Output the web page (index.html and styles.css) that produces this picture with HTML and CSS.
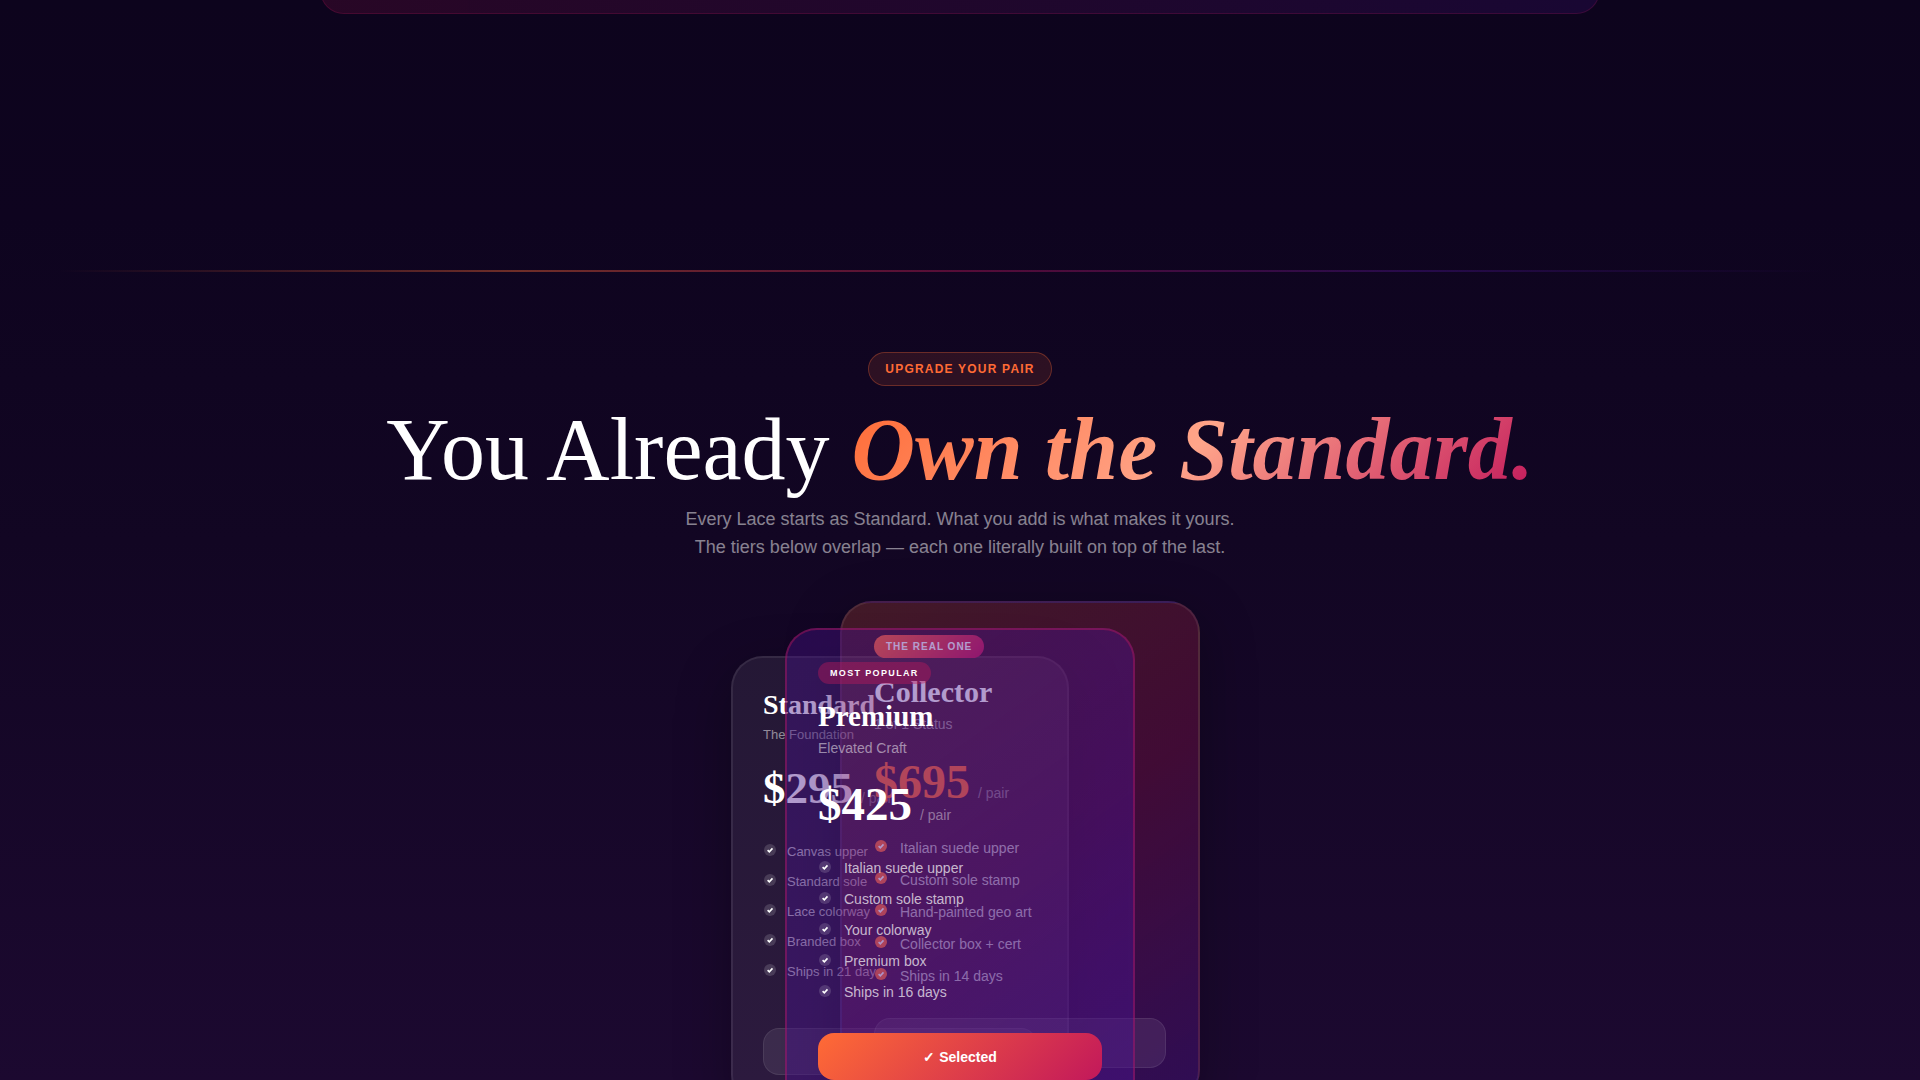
FILE: index.html
```html
<!DOCTYPE html>
<html lang="en">
<head>
    <meta charset="UTF-8">
    <meta name="viewport" content="width=device-width, initial-scale=1.0">
    <title>Lace</title>
    <link rel="stylesheet" href="styles.css">
</head>
<body>
    <svg class="sprite" aria-hidden="true">
        <symbol id="check" viewBox="0 0 14 14">
            <circle cx="7" cy="7" r="6"/>
            <path d="M4.6 7.2l1.7 1.6 3.2-3.4" fill="none" stroke="currentColor" stroke-width="1.6"/>
        </symbol>
    </svg>

    <div class="panel-end"></div>
    <hr class="divider">

    <section class="pricing">
        <span class="eyebrow">Upgrade Your Pair</span>
        <h1>You Already <em>Own the Standard.</em></h1>
        <p class="lead">Every Lace starts as Standard. What you add is what makes it yours.<br>The tiers below overlap — each one literally built on top of the last.</p>

        <div class="tiers">
            <article class="tier standard">
                <h2>Standard</h2>
                <p class="sub">The Foundation</p>
                <p class="price">$295<span>/ pair</span></p>
                <ul>
                    <li><svg><use href="#check"/></svg>Canvas upper</li>
                    <li><svg><use href="#check"/></svg>Standard sole</li>
                    <li><svg><use href="#check"/></svg>Lace colorway</li>
                    <li><svg><use href="#check"/></svg>Branded box</li>
                    <li><svg><use href="#check"/></svg>Ships in 21 days</li>
                </ul>
                <button class="btn" type="button">Select</button>
            </article>

            <article class="tier collector">
                <span class="badge">The Real One</span>
                <h2>Collector</h2>
                <p class="sub">1 of 1 Status</p>
                <p class="price">$695<span>/ pair</span></p>
                <ul>
                    <li><svg><use href="#check"/></svg>Italian suede upper</li>
                    <li><svg><use href="#check"/></svg>Custom sole stamp</li>
                    <li><svg><use href="#check"/></svg>Hand-painted geo art</li>
                    <li><svg><use href="#check"/></svg>Collector box + cert</li>
                    <li><svg><use href="#check"/></svg>Ships in 14 days</li>
                </ul>
                <button class="btn" type="button">Select</button>
            </article>

            <article class="tier premium">
                <span class="badge">Most Popular</span>
                <h2>Premium</h2>
                <p class="sub">Elevated Craft</p>
                <p class="price">$425<span>/ pair</span></p>
                <ul>
                    <li><svg><use href="#check"/></svg>Italian suede upper</li>
                    <li><svg><use href="#check"/></svg>Custom sole stamp</li>
                    <li><svg><use href="#check"/></svg>Your colorway</li>
                    <li><svg><use href="#check"/></svg>Premium box</li>
                    <li><svg><use href="#check"/></svg>Ships in 16 days</li>
                </ul>
                <button class="btn selected" type="button">✓ Selected</button>
            </article>
        </div>
    </section>
</body>
</html>
```
FILE: styles.css
```css
* {
    box-sizing: border-box;
    margin: 0;
    padding: 0;
}
html {
    height: 100%;
    overflow: hidden;
}
body {
    display: flow-root;
    min-height: 100%;
    background: linear-gradient(180deg, #0d041d 0%, #0e041f 20%, #120623 50%, #1c0930 100%);
    color: #fff;
    font-family: "Liberation Sans", Arial, sans-serif;
}
.sprite {
    display: none;
}
.panel-end {
    max-width: 1280px;
    height: 40px;
    margin: -26px auto 0;
    border: 1px solid rgba(194, 24, 91, 0.2);
    border-radius: 0 0 24px 24px;
    background: linear-gradient(90deg, rgba(194, 24, 91, 0.15), rgba(74, 20, 140, 0.2));
}
.divider {
    height: 2px;
    margin: 256px 0 80px;
    border: 0;
    background: linear-gradient(90deg, transparent 3%, #ff6b35 27%, #c2185b 50%, #4a148c 74%, transparent 95%);
    opacity: 0.4;
}
.pricing {
    display: flex;
    flex-direction: column;
    align-items: center;
    text-align: center;
}
.eyebrow {
    padding: 0 16px;
    border: 1px solid rgba(255, 107, 53, 0.3);
    border-radius: 17px;
    background: rgba(255, 107, 53, 0.12);
    color: #ff6b35;
    font-size: 12px;
    font-weight: 700;
    line-height: 32px;
    letter-spacing: 0.1em;
    text-transform: uppercase;
}
h1 {
    margin-top: 16px;
    font-family: "Liberation Serif", "Times New Roman", serif;
    font-size: 88px;
    font-weight: 400;
    line-height: 96px;
}
h1 em {
    font-weight: 700;
    background: linear-gradient(135deg, #ff6b35 0%, #ffa58a 50%, #c2185b 100%);
    -webkit-background-clip: text;
    background-clip: text;
    color: transparent;
}
.lead {
    margin-top: 7px;
    color: rgba(255, 255, 255, 0.5);
    font-size: 18px;
    line-height: 28px;
}

/* the three cards share one grid cell and fan out to the right */
.tiers {
    display: grid;
    width: 458px;
    margin-top: 40px;
    text-align: left;
}
.tier {
    grid-area: 1 / 1;
    align-self: start;
    padding: 32px;
    border: 2px solid rgba(255, 255, 255, 0.08);
    border-radius: 32px;
}
.tier h2 {
    font-family: "Liberation Serif", "Times New Roman", serif;
    line-height: 34px;
}
.tier .sub {
    margin-top: 7px;
    color: rgba(255, 255, 255, 0.5);
    line-height: 16px;
}
.tier .price {
    font-family: "Liberation Serif", "Times New Roman", serif;
    font-weight: 700;
    line-height: 48px;
}
.tier .price span {
    margin-left: 8px;
    color: rgba(255, 255, 255, 0.4);
    font-family: "Liberation Sans", Arial, sans-serif;
    font-size: 14px;
    font-weight: 400;
}
.tier ul {
    list-style: none;
}
.tier li {
    display: flex;
    align-items: center;
    gap: 12px;
    color: rgba(255, 255, 255, 0.7);
}
.tier li svg {
    width: 14px;
    height: 14px;
    margin-bottom: 4px;
    fill: rgba(255, 255, 255, 0.15);
    color: #fff;
}
.badge {
    display: inline-block;
    padding: 0 12px;
    border-radius: 12px;
    font-weight: 700;
    letter-spacing: 0.1em;
    text-transform: uppercase;
}
.btn {
    width: 100%;
    height: 47px;
    border: 1px solid rgba(255, 255, 255, 0.08);
    border-radius: 16px;
    background: rgba(255, 255, 255, 0.08);
    color: #fff;
    font-family: inherit;
    font-size: 14px;
    font-weight: 700;
}

.standard {
    width: 338px;
    margin-top: 55px;
    padding: 30px;
    background: rgba(255, 255, 255, 0.07);
    box-shadow: 0 16px 56px rgba(0, 0, 0, 0.3);
    font-size: 13px;
}
.standard h2 {
    font-size: 28px;
}
.standard .sub {
    margin-top: 5px;
}
.standard .price {
    margin: 21px 0 15px;
    font-size: 45px;
}
.standard li {
    gap: 10px;
    line-height: 30px;
}
.standard .btn {
    margin-top: 41px;
}

.collector {
    width: 360px;
    margin-left: 109px;
    background: linear-gradient(145deg, rgba(255, 107, 53, 0.2), rgba(194, 24, 91, 0.25) 50%, rgba(74, 20, 140, 0.4));
    box-shadow: 0 16px 56px rgba(0, 0, 0, 0.3);
    font-size: 14px;
}
.collector .badge {
    background: linear-gradient(135deg, #ff6b35, #c2185b);
    font-size: 10px;
    line-height: 23px;
}
.collector h2 {
    margin-top: 17px;
    font-size: 30px;
}
.collector .price {
    margin: 26px 0 15px;
    color: #ff6b35;
    font-size: 48px;
}
.collector li {
    line-height: 32px;
}
.collector li svg {
    fill: #ff6b35;
}
.collector .btn {
    height: 50px;
    margin-top: 26px;
}

.premium {
    width: 350px;
    margin-top: 27px;
    margin-left: 54px;
    padding: 32px 31px;
    border-color: rgba(194, 24, 91, 0.4);
    background: linear-gradient(145deg, rgba(74, 20, 140, 0.4), rgba(74, 20, 140, 0.5));
    font-size: 14px;
}
.premium .badge {
    background: rgba(194, 24, 91, 0.4);
    font-size: 9px;
    line-height: 22px;
    letter-spacing: 0.15em;
}
.premium h2 {
    margin-top: 15px;
    font-size: 29px;
}
.premium .price {
    margin: 24px 0 14px;
    font-size: 47px;
}
.premium li {
    line-height: 31px;
}
.premium .btn {
    margin-top: 25px;
}
.btn.selected {
    border: 0;
    background: linear-gradient(135deg, #ff6b35, #c2185b);
}
```
